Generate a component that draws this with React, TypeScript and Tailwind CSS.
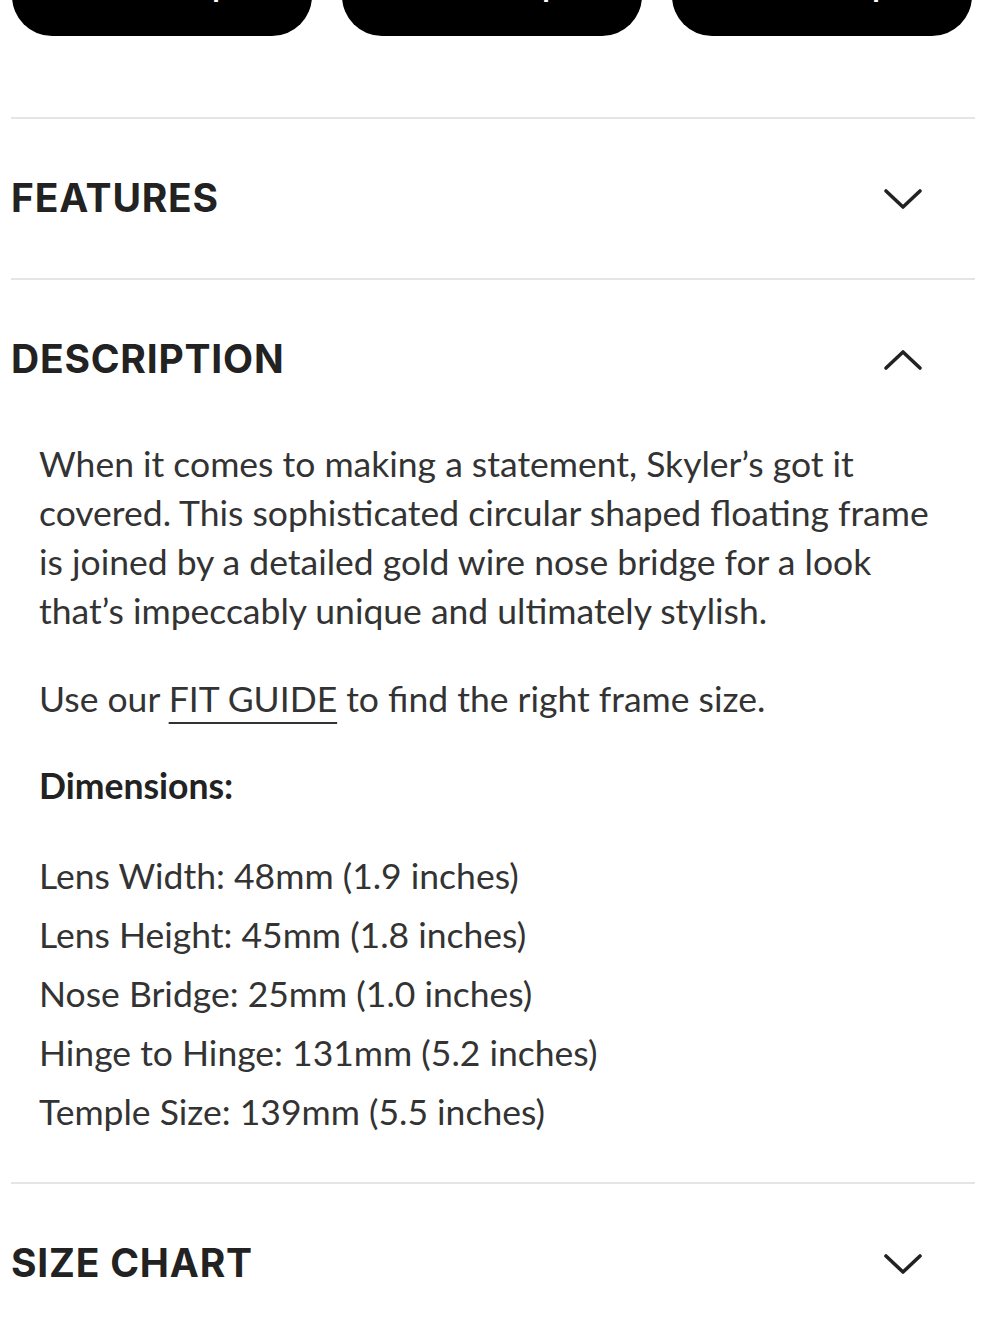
import React from 'react';

const Chevron: React.FC<{ up?: boolean }> = ({ up }) => (
  <svg width="40" height="24" viewBox="0 0 40 24" fill="none" className="shrink-0">
    <path
      d={up ? 'M3 20 L20 4 L37 20' : 'M3 4 L20 20 L37 4'}
      stroke="#222"
      strokeWidth="3.6"
      strokeLinecap="round"
      strokeLinejoin="round"
    />
  </svg>
);

const Section: React.FC<{ title: string; open?: boolean; children?: React.ReactNode }> = ({ title, open, children }) => (
  <div className="border-t-2 border-[#e5e5e5]">
    <button className="flex h-[159px] w-full items-center justify-between pr-[52px] text-left">
      <span className="font-['Inter',sans-serif] text-[39px] font-bold tracking-[0.02em] text-[#222]">{title}</span>
      <Chevron up={open} />
    </button>
    {children}
  </div>
);

const dims = [
  'Lens Width: 48mm (1.9 inches)',
  'Lens Height: 45mm (1.8 inches)',
  'Nose Bridge: 25mm (1.0 inches)',
  'Hinge to Hinge: 131mm (5.2 inches)',
  'Temple Size: 139mm (5.5 inches)',
];

const App: React.FC = () => {
  return (
    <div className="min-h-screen bg-white">
      <div className="overflow-hidden">
        <div className="mt-[-44px] flex gap-[30px] px-[12px]">
          {['Shop', 'Shop', 'Shop'].map((t, i) => (
            <div
              key={i}
              className="flex h-[80px] w-[300px] items-start justify-center overflow-hidden rounded-[40px] bg-black"
            >
              <span className="mt-[14px] pl-[68px] font-['Inter',sans-serif] text-[26px] font-bold leading-[36px] text-white">
                {t}
              </span>
            </div>
          ))}
        </div>
      </div>

      <div className="ml-[11px] mr-[25px] mt-[81px]">
        <Section title="FEATURES" />
        <Section title="DESCRIPTION" open>
          <div className="pb-[41px] pl-[28px] pt-0 font-['Lato',sans-serif] text-[35.5px] text-[#333]">
            <p className="leading-[49px]">
              When it comes to making a statement, Skyler’s got it
              <br />
              covered. This sophisticated circular shaped floating frame
              <br />
              is joined by a detailed gold wire nose bridge for a look
              <br />
              that’s impeccably unique and ultimately stylish.
            </p>
            <p className="mt-[39px] leading-[49px]">
              Use our{' '}
              <a className="underline decoration-2 underline-offset-[10px]" href="#">
                FIT GUIDE
              </a>{' '}
              to find the right frame size.
            </p>
            <p className="mt-[38px] font-bold leading-[49px] text-[#222]">Dimensions:</p>
            <div className="mt-[36px]">
              {dims.map((d) => (
                <p key={d} className="leading-[59px]">
                  {d}
                </p>
              ))}
            </div>
          </div>
        </Section>
        <Section title="SIZE CHART" />
      </div>
    </div>
  );
};

export default App;
